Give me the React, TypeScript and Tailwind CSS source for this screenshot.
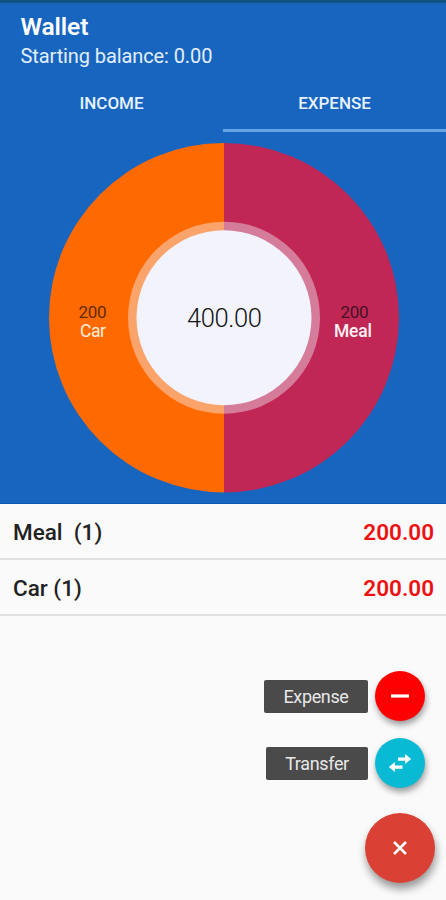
import React, { useState } from "react";

const tabs = ["INCOME", "EXPENSE"];

const categories = [
  { name: "Meal ", count: 1, total: "200.00" },
  { name: "Car", count: 1, total: "200.00" },
];

function Donut() {
  return (
    <svg viewBox="0 0 446 371" className="block h-[371px] w-full font-[Roboto,sans-serif]">
      <path d="M224 11a175 174.7 0 0 0 0 349.4z" fill="#ff6a00" />
      <path d="M224 11a175 174.7 0 0 1 0 349.4z" fill="#c02754" />
      <circle cx="224" cy="185.7" r="96" fill="#f2f3fc" fillOpacity="0.42" />
      <circle cx="224" cy="185.7" r="87.5" fill="#f2f3fc" />
      <text x="224.5" y="194.5" fontSize="25.5" fontWeight="350" textAnchor="middle" textLength="75" fill="#111">
        400.00
      </text>
      <text x="92.5" y="186" fontSize="17" textAnchor="middle" textLength="28" fill="#5e2a08">
        200
      </text>
      <text x="93" y="205" fontSize="17.5" textAnchor="middle" textLength="26" fill="#ffeedd">
        Car
      </text>
      <text x="354.5" y="186" fontSize="17" textAnchor="middle" textLength="28" fill="#451327">
        200
      </text>
      <text x="353" y="205" fontSize="17.5" fontWeight="500" textAnchor="middle" textLength="38" fill="#fff0f5">
        Meal
      </text>
    </svg>
  );
}

function App() {
  const [active, setActive] = useState("EXPENSE");

  return (
    <div className="flex h-[900px] w-full flex-col overflow-hidden bg-[#fafafa] font-[Roboto,sans-serif]">
      <div className="h-[3px] bg-[#0f5480]" />

      <header className="h-[129px] bg-[#1865c0] text-white">
        <div className="h-[76px] pt-[9px] pl-[20.5px]">
          <h1 className="text-[24.5px] leading-[30px] font-semibold tracking-[-0.1px]">Wallet</h1>
          <p className="text-[20px] leading-[28px] tracking-[-0.1px] text-[#e3effd]">Starting balance: 0.00</p>
        </div>
        <div className="flex h-[53px]">
          {tabs.map((tab) => (
            <button
              key={tab}
              onClick={() => setActive(tab)}
              className={`flex-1 border-b-3 pb-px text-[17px] font-medium text-[#e8f3ff] ${
                active === tab ? "border-[#64a4e3]" : "border-transparent"
              }`}
            >
              {tab}
            </button>
          ))}
        </div>
      </header>

      <section className="border-b border-[#0b55ad] bg-[#1865c0]">
        <Donut />
      </section>

      <ul className="text-[#222]">
        {categories.map((item) => (
          <li
            key={item.name}
            className="flex h-[56px] items-center justify-between border-b-2 border-[#e0e0e0] pt-[4px] pr-[12px] pl-[13px] text-[22.5px] font-medium"
          >
            <span className="whitespace-pre">
              {item.name} ({item.count})
            </span>
            <span className="font-semibold text-[#ea1212]">{item.total}</span>
          </li>
        ))}
      </ul>

      <div className="flex flex-col items-end pt-[55px]">
        <div className="flex items-center gap-[7px] pr-[21px]">
          <span className="flex h-[33px] w-[104px] items-center justify-center rounded-[2px] bg-[#4a4a4a] pt-px text-[18px] tracking-[-0.35px] text-[#e8e8e8]">
            Expense
          </span>
          <button className="flex size-[50px] items-center justify-center rounded-full bg-[#fe0000] shadow-[1px_4px_6px_rgba(0,0,0,0.38)]">
            <svg viewBox="0 0 24 24" className="size-[24px]">
              <path d="M3 12h18" stroke="#fff" strokeWidth="3.2" />
            </svg>
          </button>
        </div>
        <div className="mt-[17px] flex items-center gap-[7px] pr-[21px]">
          <span className="flex h-[33px] w-[102px] items-center justify-center rounded-[2px] bg-[#4a4a4a] pt-px text-[18px] tracking-[-0.35px] text-[#e8e8e8]">
            Transfer
          </span>
          <button className="flex size-[50px] items-center justify-center rounded-full bg-[#08bad3] shadow-[1px_4px_6px_rgba(0,0,0,0.38)]">
            <svg viewBox="0 0 24 24" className="size-[24px]" fill="#fff">
              <path d="M10 6.6h7V3l6.2 5-6.2 5V9.8h-7zM14.5 14.6H7V11L.8 16 7 21v-3.2h7.5z" />
            </svg>
          </button>
        </div>
        <button className="mt-[25px] mr-[11px] flex size-[70px] items-center justify-center rounded-full bg-[#db4035] shadow-[1px_6px_9px_rgba(0,0,0,0.4)]">
          <svg viewBox="0 0 16 16" className="size-[16px]">
            <path d="M2 2l12 12M14 2L2 14" stroke="#fff" strokeWidth="2.6" />
          </svg>
        </button>
      </div>
    </div>
  );
}

export default App;
